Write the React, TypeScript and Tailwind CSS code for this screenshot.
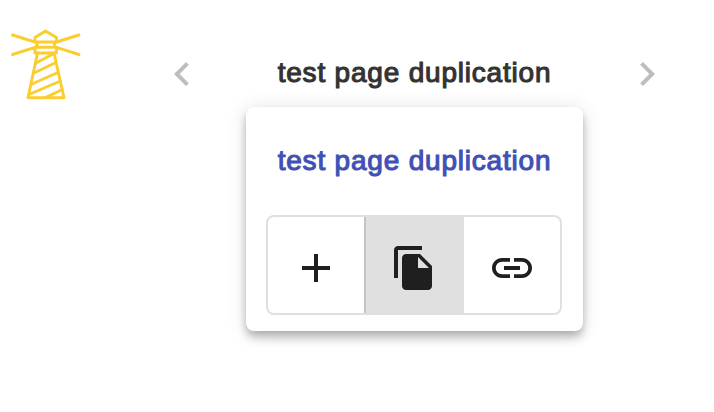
import type { ReactNode } from "react";

const PATHS = {
  left: "M15.41 7.41L14 6l-6 6 6 6 1.41-1.41L10.83 12z",
  right: "M10 6L8.59 7.41 13.17 12l-4.58 4.59L10 18l6-6z",
  add: "M19 13h-6v6h-2v-6H5v-2h6V5h2v6h6v2z",
  copy: "M16 1H4c-1.1 0-2 .9-2 2v14h2V3h12V1zm-1 4l6 6v10c0 1.1-.9 2-2 2H7.99C6.89 23 6 22.1 6 21V7c0-1.1.89-2 1.99-2h7zm-1 7h5.5L14 6.5V12z",
  link: "M3.9 12c0-1.71 1.39-3.1 3.1-3.1h4V7H7c-2.76 0-5 2.24-5 5s2.24 5 5 5h4v-1.9H7c-1.71 0-3.1-1.39-3.1-3.1zM8 13h8v-2H8v2zm9-6h-4v1.9h4c1.71 0 3.1 1.39 3.1 3.1s-1.39 3.1-3.1 3.1h-4V17h4c2.76 0 5-2.24 5-5s-2.24-5-5-5z",
};

function Icon({ name }: { name: keyof typeof PATHS }) {
  return (
    <svg viewBox="0 0 24 24" fill="currentColor" className="size-12 shrink-0">
      <path d={PATHS[name]} />
    </svg>
  );
}

function Lighthouse() {
  return (
    <svg
      viewBox="0 0 72 72"
      fill="none"
      stroke="#fbcd2f"
      strokeWidth="2.9"
      strokeLinecap="round"
      strokeLinejoin="round"
      className="size-[72px] shrink-0"
    >
      <path d="M25 14V9.5L35.5 3L46.5 9.5V14H25ZM27 14V19.3M44.5 14V19.3M25 19.3H46.5V25H25ZM2.5 7L25 14M69 7L46.5 14M2.5 26.5L25 19.3M69 26.5L46.5 19.3" />
      <path d="M27.5 25L18 69.7H54L44 25M26.5 34.8L43 26M24 45L45.5 34.8M22 56L48 44.5M20 66L50.5 53M35.5 69.5L52.5 61.5" />
    </svg>
  );
}

function Action({ label, className, children }: { label: string; className: string; children: ReactNode }) {
  return (
    <button aria-label={label} className={`flex items-center justify-center pt-1.5 ${className}`}>
      {children}
    </button>
  );
}

const titleClass =
  "whitespace-nowrap text-[28px] leading-8 tracking-[0.8px] [-webkit-text-stroke:1.1px_currentColor]";

export default function App() {
  return (
    <div className="flex h-[412px] w-[714px] items-start overflow-hidden bg-white pt-7 font-['Liberation_Sans',Arial,sans-serif]">
      <div className="ml-[10px]">
        <Lighthouse />
      </div>
      <main className="ml-[76px] flex w-[513px] flex-col items-center pt-[22px]">
        <header className="flex w-full items-center justify-between">
          <button aria-label="Previous page" className="text-[#bdbdbd]">
            <Icon name="left" />
          </button>
          <h1 className={`${titleClass} pb-0.5 text-[#333333]`}>test page duplication</h1>
          <button aria-label="Next page" className="text-[#bdbdbd]">
            <Icon name="right" />
          </button>
        </header>
        <section className="mt-[9px] flex h-56 w-[337px] flex-col items-center rounded-lg bg-white pt-[38px] shadow-[0_4px_8px_-2px_rgba(0,0,0,0.2),0_8px_10px_0_rgba(0,0,0,0.14),0_2px_20px_0_rgba(0,0,0,0.12)]">
          <h2 className={`${titleClass} text-[#3f51b5]`}>test page duplication</h2>
          <div className="mt-[38px] mr-px flex h-[100px] w-[296px] overflow-hidden rounded-lg border-2 border-[#e0e0e0] text-[#1f1f1f]">
            <Action label="Add page" className="w-24">
              <Icon name="add" />
            </Action>
            <Action label="Duplicate page" className="w-[100px] border-l-2 border-[#c4c4c4] bg-[#e0e0e0] pr-0.5">
              <Icon name="copy" />
            </Action>
            <Action label="Copy link" className="w-24">
              <Icon name="link" />
            </Action>
          </div>
        </section>
      </main>
    </div>
  );
}
